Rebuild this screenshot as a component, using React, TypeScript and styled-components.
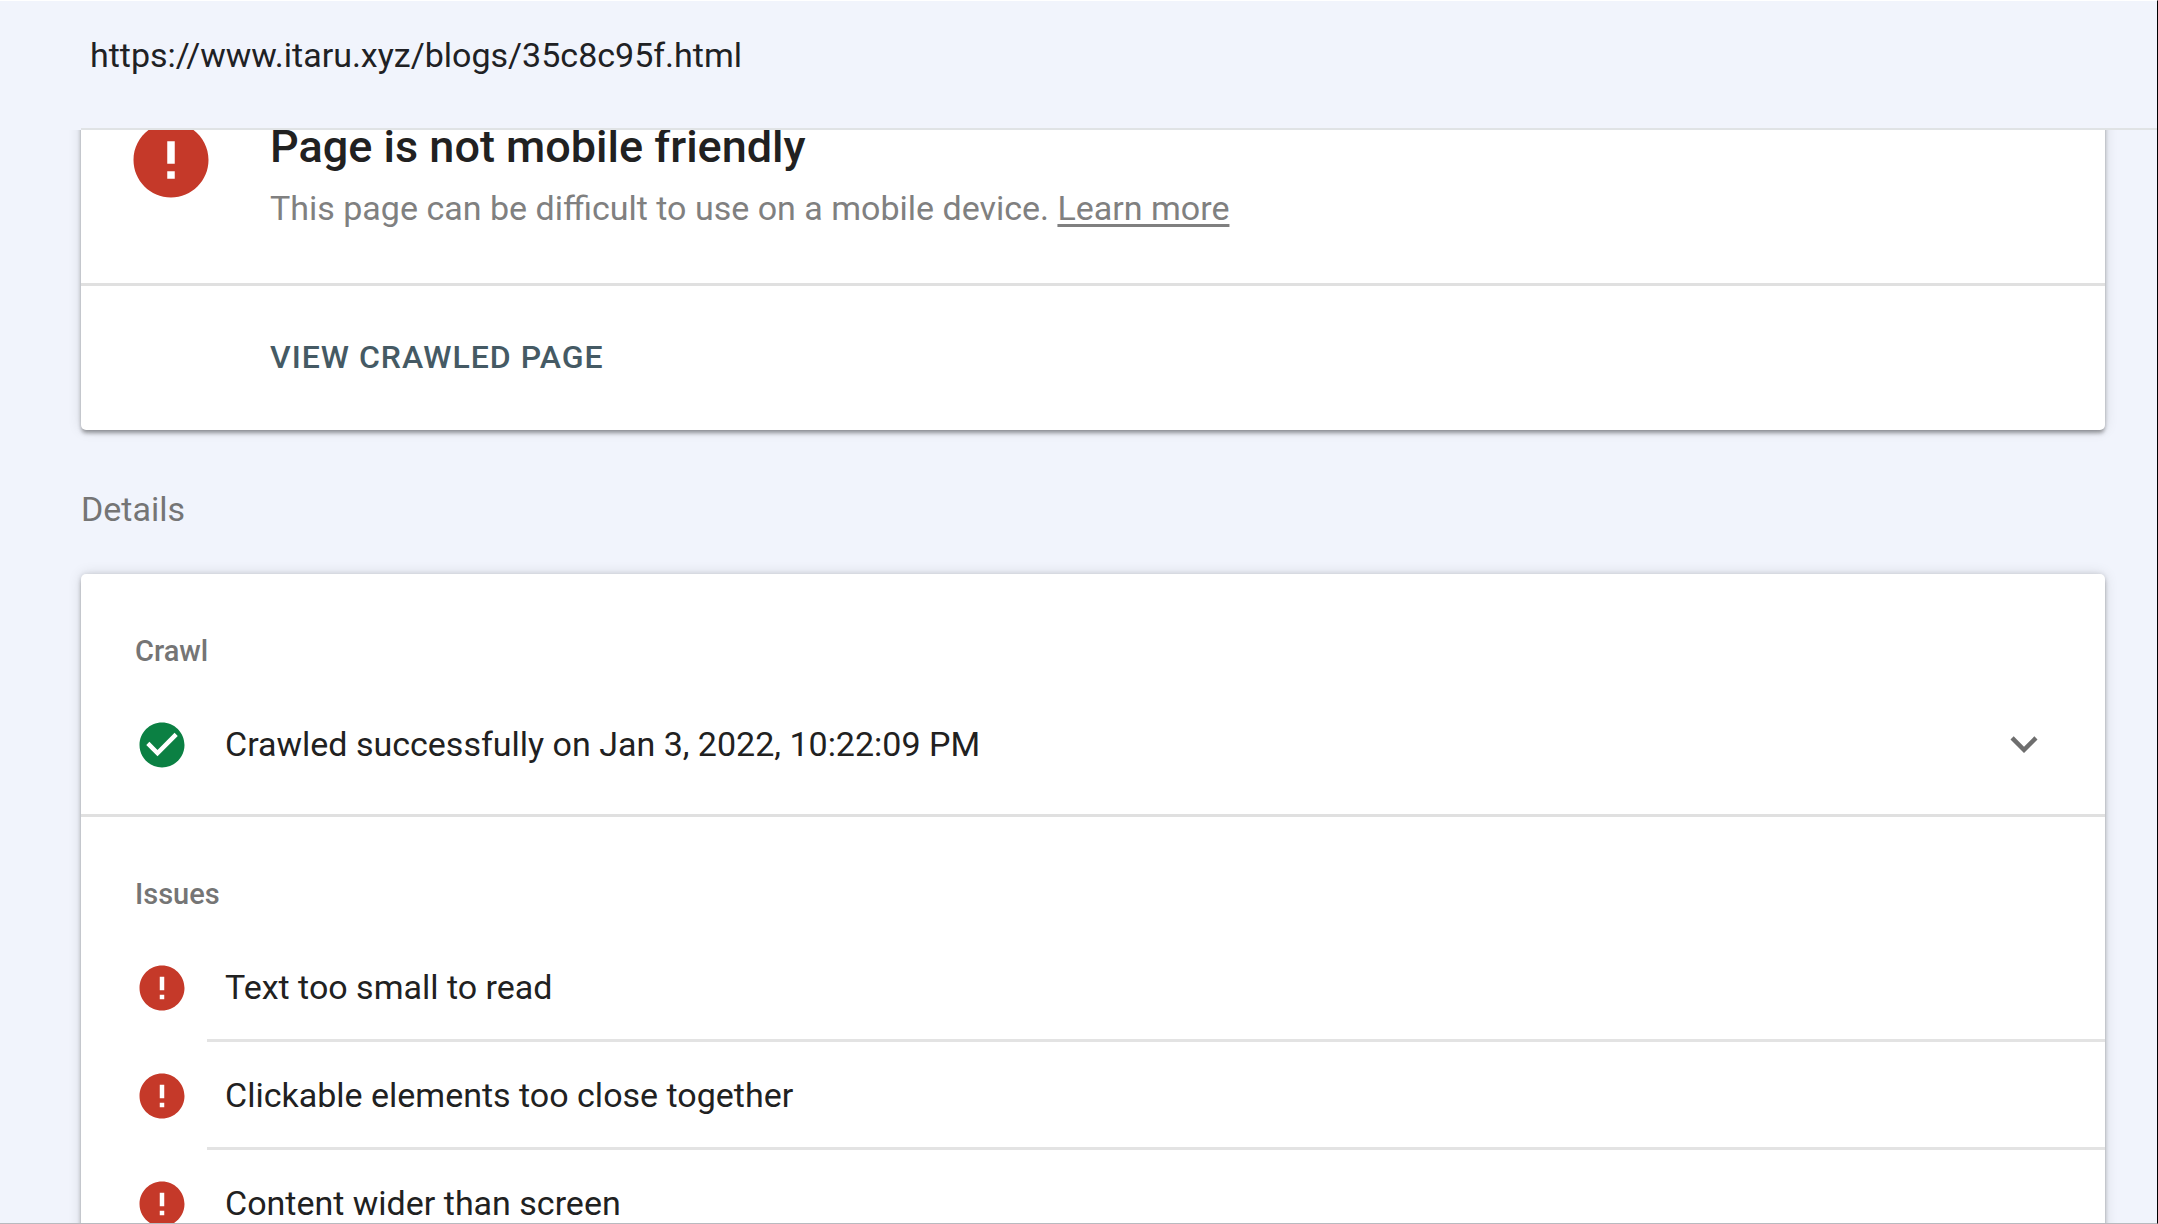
import React from "react";
import styled, { createGlobalStyle } from "styled-components";

const GlobalStyle = createGlobalStyle`
  * { box-sizing: border-box; }
  body {
    margin: 0;
    background: #f1f4fc;
    color: #212121;
    font: 400 34px/54px Roboto, sans-serif;
  }
  h1, h2, h3, p, ul { margin: 0; padding: 0; }
`;

const Page = styled.div`
  height: 100vh;
  display: flex;
  flex-direction: column;
  overflow: hidden;
  border-top: 1px solid #ffffff;
  border-right: 1px solid #000000;
  border-bottom: 1px solid #b8babf;
`;

const Header = styled.header`
  flex: none;
  margin-left: 81px;
  padding: 27px 9px 46px;
  border-bottom: 2px solid #e0e3e5;
`;

const Url = styled.p`
  color: #202124;
  font-family: "Google Sans", Roboto, sans-serif;
`;

const Scroller = styled.main`
  flex: 1;
  min-height: 0;
  overflow: hidden;
`;

const Content = styled.div`
  margin-top: -63px;
  padding: 0 52px 0 81px;
`;

const Card = styled.section`
  background: #ffffff;
  border-radius: 5px;
  box-shadow: 0 0 5px rgba(0, 0, 0, 0.12), 0 0 14px rgba(0, 0, 0, 0.12), 0 4px 4px -1px rgba(0, 0, 0, 0.34);
`;

const Verdict = styled.div`
  display: flex;
  align-items: flex-start;
  gap: 54px;
  padding: 48px 45px 46px;
  border-bottom: 3px solid #e0e0e0;
`;

const Title = styled.h1`
  font-size: 45px;
  font-weight: 500;
  line-height: 64px;
`;

const Summary = styled.p`
  color: #808080;
  line-height: 58px;
`;

const LearnMore = styled.a`
  color: inherit;
  text-decoration: underline;
  text-decoration-thickness: 3px;
  text-underline-offset: 4px;
  text-decoration-skip-ink: none;
`;

const Actions = styled.div`
  padding: 47px 189px 49px;
`;

const TextButton = styled.button`
  display: block;
  padding: 0;
  border: 0;
  background: none;
  color: #455a64;
  font: 500 32px/48px Roboto, sans-serif;
  letter-spacing: 1px;
  text-transform: uppercase;
  cursor: pointer;
`;

const SectionTitle = styled.h2`
  padding: 52px 0 38px;
  color: #757575;
  font-size: 34px;
  font-weight: 400;
`;

const Group = styled.section`
  padding: 59px 0 15px;

  & + & {
    border-top: 3px solid #e0e0e0;
  }
`;

const GroupLabel = styled.h3`
  padding: 0 54px;
  color: #757575;
  font-size: 29px;
  font-weight: 500;
  line-height: 36px;
`;

const List = styled.ul`
  list-style: none;
  padding-top: 22px;
`;

const Row = styled.li`
  display: flex;
  align-items: center;
  padding-left: 54px;
`;

const RowBody = styled.div<{ $divided?: boolean }>`
  flex: 1;
  display: flex;
  align-items: center;
  justify-content: space-between;
  height: 108px;
  margin-left: 18px;
  padding: 0 54px 0 18px;
  border-bottom: 3px solid ${(p) => (p.$divided ? "#e3e3e3" : "transparent")};
`;

const IconButton = styled.button`
  display: flex;
  padding: 0;
  border: 0;
  background: none;
  cursor: pointer;
`;

const Icon = styled.svg<{ $size: number; $color: string }>`
  flex: none;
  width: ${(p) => p.$size}px;
  height: ${(p) => p.$size}px;
  fill: ${(p) => p.$color};
`;

const ErrorIcon = ({ size = 54 }: { size?: number }) => (
  <Icon $size={size} $color="#c53929" viewBox="0 0 24 24" aria-hidden="true">
    <path d="M12 2C6.48 2 2 6.48 2 12s4.48 10 10 10 10-4.48 10-10S17.52 2 12 2zm1 15h-2v-2h2v2zm0-4h-2V7h2v6z" />
  </Icon>
);

const CheckIcon = () => (
  <Icon $size={54} $color="#0b8043" viewBox="0 0 24 24" aria-hidden="true">
    <path d="M12 2C6.48 2 2 6.48 2 12s4.48 10 10 10 10-4.48 10-10S17.52 2 12 2zm-2 15l-5-5 1.41-1.41L10 14.17l7.59-7.59L19 8l-9 9z" />
  </Icon>
);

const ExpandIcon = () => (
  <Icon $size={54} $color="#6e6e6e" viewBox="0 0 24 24" aria-hidden="true">
    <path d="M16.59 8.59L12 13.17 7.41 8.59 6 10l6 6 6-6z" />
  </Icon>
);

const issues = [
  "Text too small to read",
  "Clickable elements too close together",
  "Content wider than screen",
];

export default function App() {
  return (
    <Page>
      <GlobalStyle />
      <Header>
        <Url>https://www.itaru.xyz/blogs/35c8c95f.html</Url>
      </Header>
      <Scroller>
        <Content>
          <Card>
            <Verdict>
              <ErrorIcon size={90} />
              <div>
                <Title>Page is not mobile friendly</Title>
                <Summary>
                  This page can be difficult to use on a mobile device.{" "}
                  <LearnMore href="#learn-more">Learn more</LearnMore>
                </Summary>
              </div>
            </Verdict>
            <Actions>
              <TextButton type="button">View crawled page</TextButton>
            </Actions>
          </Card>
          <SectionTitle>Details</SectionTitle>
          <Card>
            <Group>
              <GroupLabel>Crawl</GroupLabel>
              <List>
                <Row>
                  <CheckIcon />
                  <RowBody>
                    Crawled successfully on Jan 3, 2022, 10:22:09 PM
                    <IconButton type="button" aria-label="Show crawl details">
                      <ExpandIcon />
                    </IconButton>
                  </RowBody>
                </Row>
              </List>
            </Group>
            <Group>
              <GroupLabel>Issues</GroupLabel>
              <List>
                {issues.map((issue) => (
                  <Row key={issue}>
                    <ErrorIcon />
                    <RowBody $divided>{issue}</RowBody>
                  </Row>
                ))}
              </List>
            </Group>
          </Card>
        </Content>
      </Scroller>
    </Page>
  );
}
